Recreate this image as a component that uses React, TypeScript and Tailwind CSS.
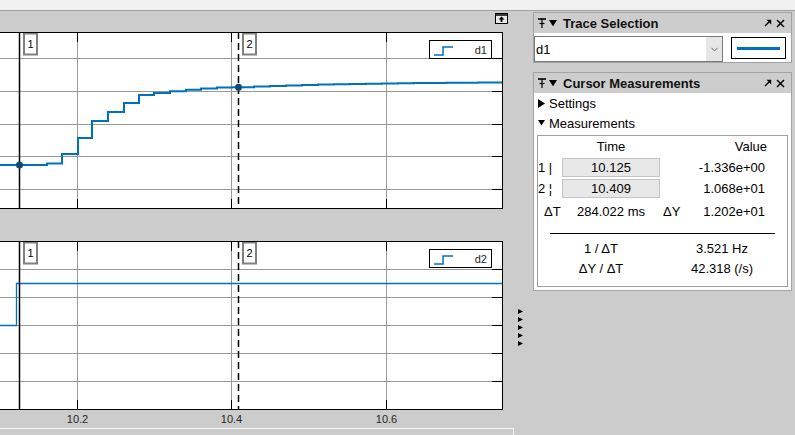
import React from "react";

const BLUE = "#0072bd";
const DOT = "#0b4a78";

type PlotProps = {
  height: number;
  hLines: number[];
  path: string;
  strokeWidth: number;
  dots: [number, number][];
  label: string;
};

const V_LINES = [77.5, 231.5, 386.5];

function Plot({ height, hLines, path, strokeWidth, dots, label }: PlotProps) {
  const bottom = height - 0.5;
  return (
    <svg width={503} height={height} className="block bg-white">
      {/* grid */}
      {hLines.map((y) => (
        <line key={"h" + y} x1={0} x2={502} y1={y} y2={y} stroke="#999" strokeWidth={1} />
      ))}
      {V_LINES.map((x) => (
        <line key={"v" + x} x1={x} x2={x} y1={0} y2={height} stroke="#999" strokeWidth={1} />
      ))}
      {/* ticks */}
      {V_LINES.map((x) => (
        <g key={"t" + x}>
          <line x1={x} x2={x} y1={0} y2={10} stroke="#000" />
          <line x1={x} x2={x} y1={height - 10} y2={height} stroke="#000" />
        </g>
      ))}
      {hLines.map((y) => (
        <line key={"r" + y} x1={492} x2={502} y1={y} y2={y} stroke="#000" />
      ))}
      {/* signal */}
      <path d={path} fill="none" stroke={BLUE} strokeWidth={strokeWidth} strokeLinejoin="miter" />
      {/* cursors */}
      <line x1={19.5} x2={19.5} y1={0} y2={height} stroke="#000" strokeWidth={1.5} />
      <line x1={238.5} x2={238.5} y1={0} y2={height} stroke="#000" strokeWidth={1.5} strokeDasharray="7 4" />
      {dots.map(([x, y]) => (
        <circle key={x} cx={x} cy={y} r={3.5} fill={DOT} />
      ))}
      {/* cursor labels */}
      <rect x={24} y={1.5} width={13} height={21} fill="#fff" stroke="#808080" strokeWidth={2} />
      <text x={30.5} y={16} fontSize={11} textAnchor="middle" fill="#000">1</text>
      <rect x={243} y={1.5} width={13} height={21} fill="#fff" stroke="#808080" strokeWidth={2} />
      <text x={249.5} y={16} fontSize={11} textAnchor="middle" fill="#000">2</text>
      {/* legend */}
      <rect x={429.5} y={8.5} width={62} height={18} fill="#fff" stroke="#000" strokeWidth={1} />
      <path d="M434 23 H443 V15 H453" fill="none" stroke={BLUE} strokeWidth={1.5} />
      <text x={487} y={22} fontSize={11} textAnchor="end" fill="#262626">{label}</text>
      {/* frame */}
      <line x1={0} x2={503} y1={0.5} y2={0.5} stroke="#000" />
      <line x1={0} x2={503} y1={bottom} y2={bottom} stroke="#000" />
      <line x1={502.5} x2={502.5} y1={0} y2={height} stroke="#000" />
    </svg>
  );
}

function topPath() {
  const pts: string[] = ["M0 133 H47 V131.5 H62 V122 H78 V106 H92 V89 H108 V80 H124 V71 H139 V63 H154 V61 H170 V59.3 H186 V57.8 H201 V56.6 H217 V55.5 H232 V55.3"];
  for (let x = 238; x < 502; x += 16) {
    const y = 81.8 + 5.5 * Math.exp(-(x - 238) / 120) - 32;
    pts.push(`H${x} V${y.toFixed(2)}`);
  }
  pts.push("H503");
  return pts.join(" ");
}

function PinIcon() {
  return (
    <svg width={8} height={10} viewBox="0 0 8 10">
      <line x1={0} x2={8} y1={1} y2={1} stroke="#000" strokeWidth={1.6} />
      <line x1={4} x2={4} y1={1} y2={10} stroke="#000" strokeWidth={1.2} />
      <line x1={1.5} x2={6.5} y1={5.5} y2={5.5} stroke="#000" strokeWidth={1.2} />
    </svg>
  );
}

function DownTri({ size = 8 }: { size?: number }) {
  return (
    <svg width={size} height={size * 0.8} viewBox="0 0 8 6.4">
      <path d="M0 0 H8 L4 6.4 Z" fill="#000" />
    </svg>
  );
}

function RightTri() {
  return (
    <svg width={7} height={9} viewBox="0 0 7 9">
      <path d="M0 0 L7 4.5 L0 9 Z" fill="#000" />
    </svg>
  );
}

function UndockIcon() {
  return (
    <svg width={8} height={8} viewBox="0 0 8 8">
      <line x1={1} y1={7} x2={6.5} y2={1.5} stroke="#000" strokeWidth={1.4} />
      <path d="M2.5 0.8 H7.2 V5.5 Z" fill="#000" />
    </svg>
  );
}

function CloseIcon() {
  return (
    <svg width={9} height={9} viewBox="0 0 9 9">
      <path d="M1 1 L8 8 M8 1 L1 8" stroke="#000" strokeWidth={1.5} />
    </svg>
  );
}

function PanelHeader({ title }: { title: string }) {
  return (
    <div className="flex h-[20px] items-center bg-[#cdcdcd] pl-[4px] pr-[6px]">
      <PinIcon />
      <span className="ml-[3px]">
        <DownTri />
      </span>
      <span className="ml-[6px] text-[13px] font-bold leading-none text-[#111]">{title}</span>
      <span className="ml-auto flex items-center gap-[4px]">
        <UndockIcon />
        <CloseIcon />
      </span>
    </div>
  );
}

export default function App() {
  return (
    <div className="flex h-[435px] w-[795px] flex-col overflow-hidden bg-[#cccccc] font-['Liberation_Sans',Arial,sans-serif] text-black">
      <div className="h-[11px] shrink-0 border-b border-[#a0a0a0] bg-[#f0f0f0]" />
      <div className="flex flex-1">
        {/* plots */}
        <div className="flex w-[530px] flex-col">
          <div className="flex h-[21px] items-start justify-end pr-[22px] pt-[2px]">
            <svg width={13} height={11} viewBox="0 0 13 11">
              <rect x={0.5} y={0.5} width={12} height={10} fill="#e8e8e8" stroke="#000" />
              <line x1={0.5} x2={12.5} y1={2} y2={2} stroke="#000" strokeWidth={1.5} />
              <path d="M6.5 3.5 L9.5 6.5 H7.5 V9 H5.5 V6.5 H3.5 Z" fill="#000" />
            </svg>
          </div>
          <div className="flex">
            <div className="flex w-[503px] flex-col">
              <Plot
                height={177}
                hLines={[26.5, 59.5, 92.5, 124.5, 157.5]}
                path={topPath()}
                strokeWidth={2}
                dots={[
                  [19.5, 133],
                  [238.5, 55.3],
                ]}
                label="d1"
              />
              <div className="h-[32px]" />
              <Plot
                height={169}
                hLines={[28.5, 56.5, 84.5, 112.5, 140.5]}
                path="M0 84.5 H16.5 V42.5 H503"
                strokeWidth={1.3}
                dots={[]}
                label="d2"
              />
              <svg width={503} height={18} className="block">
                {[
                  [77.5, "10.2"],
                  [231.5, "10.4"],
                  [386.5, "10.6"],
                ].map(([x, t]) => (
                  <text key={t} x={x} y={12.5} fontSize={11} textAnchor="middle" fill="#262626">
                    {t}
                  </text>
                ))}
              </svg>
            </div>
            <div className="flex w-[27px] flex-col gap-[3px] pl-[15px] pt-[277px]">
              {[0, 1, 2, 3, 4].map((i) => (
                <svg key={i} width={5} height={5} viewBox="0 0 5 5">
                  <path d="M0 0 L5 2.5 L0 5 Z" fill="#000" />
                </svg>
              ))}
            </div>
          </div>
          <div className="h-[10px] w-[514px] border-r border-t border-[#f4f4f4]" />
        </div>

        {/* side panels */}
        <div className="flex w-[265px] flex-col pl-[3px] pr-[3px] pt-[1px] text-[13px]">
          <div className="border border-[#a3a3a3]">
            <PanelHeader title="Trace Selection" />
            <div className="flex h-[29px] items-start bg-white pt-[3px]">
              <div className="flex h-[26px] w-[189px] items-stretch border border-[#7a7a7a] bg-white">
                <span className="flex flex-1 items-center pl-[1px] leading-none">d1</span>
                <span className="flex w-[16px] items-center justify-center bg-[#e6e6e6]">
                  <svg width={7} height={5} viewBox="0 0 7 5">
                    <path d="M0.5 0.8 L3.5 4 L6.5 0.8" fill="none" stroke="#6e6e6e" strokeWidth={1} />
                  </svg>
                </span>
              </div>
              <div className="ml-[8px] mt-[1px] flex h-[22px] w-[55px] items-center justify-center border border-black bg-white">
                <div className="h-[3px] w-[43px] bg-[#0072bd]" />
              </div>
            </div>
          </div>

          <div className="mt-[9px] border border-[#a3a3a3]">
            <PanelHeader title="Cursor Measurements" />
            <div className="flex flex-col bg-white px-[3px] pb-[3px]">
              <div className="flex h-[20px] items-center gap-[4px] pl-[1px]">
                <RightTri />
                <span className="leading-none">Settings</span>
              </div>
              <div className="flex h-[20px] items-center gap-[4px] pl-[1px]">
                <span className="w-[7px]">
                  <DownTri size={7} />
                </span>
                <span className="leading-none">Measurements</span>
              </div>
              <div className="mt-[2px] flex h-[152px] flex-col border border-[#a0a0a0]">
                <div className="flex h-[21px] items-center leading-none">
                  <span className="w-[24px]" />
                  <span className="w-[98px] text-center">Time</span>
                  <span className="flex-1 pr-[20px] text-right">Value</span>
                </div>
                <div className="mt-[1px] flex h-[19px] items-center leading-none">
                  <span className="w-[24px]">1 |</span>
                  <span className="flex h-[19px] w-[98px] items-center justify-center border border-[#c4c4c4] bg-[#e8e8e8]">10.125</span>
                  <span className="flex-1 pr-[22px] text-right">-1.336e+00</span>
                </div>
                <div className="mt-[2px] flex h-[19px] items-center leading-none">
                  <span className="w-[24px]">2 ¦</span>
                  <span className="flex h-[19px] w-[98px] items-center justify-center border border-[#c4c4c4] bg-[#e8e8e8]">10.409</span>
                  <span className="flex-1 pr-[22px] text-right">1.068e+01</span>
                </div>
                <div className="mt-[2px] flex h-[22px] items-center leading-none">
                  <span className="w-[24px] pl-[6px]">ΔT</span>
                  <span className="w-[98px] text-center">284.022 ms</span>
                  <span className="w-[30px] pl-[3px]">ΔY</span>
                  <span className="flex-1 pr-[22px] text-right">1.202e+01</span>
                </div>
                <div className="mx-[12px] mt-[11px] h-[1px] bg-black" />
                <div className="mt-[5px] flex h-[18px] items-center leading-none">
                  <span className="w-[126px] text-center">1 / ΔT</span>
                  <span className="w-[116px] text-center">3.521 Hz</span>
                </div>
                <div className="mt-[2px] flex h-[18px] items-center leading-none">
                  <span className="w-[126px] text-center">ΔY / ΔT</span>
                  <span className="w-[116px] text-center">42.318 (/s)</span>
                </div>
              </div>
            </div>
          </div>
        </div>
      </div>
    </div>
  );
}
